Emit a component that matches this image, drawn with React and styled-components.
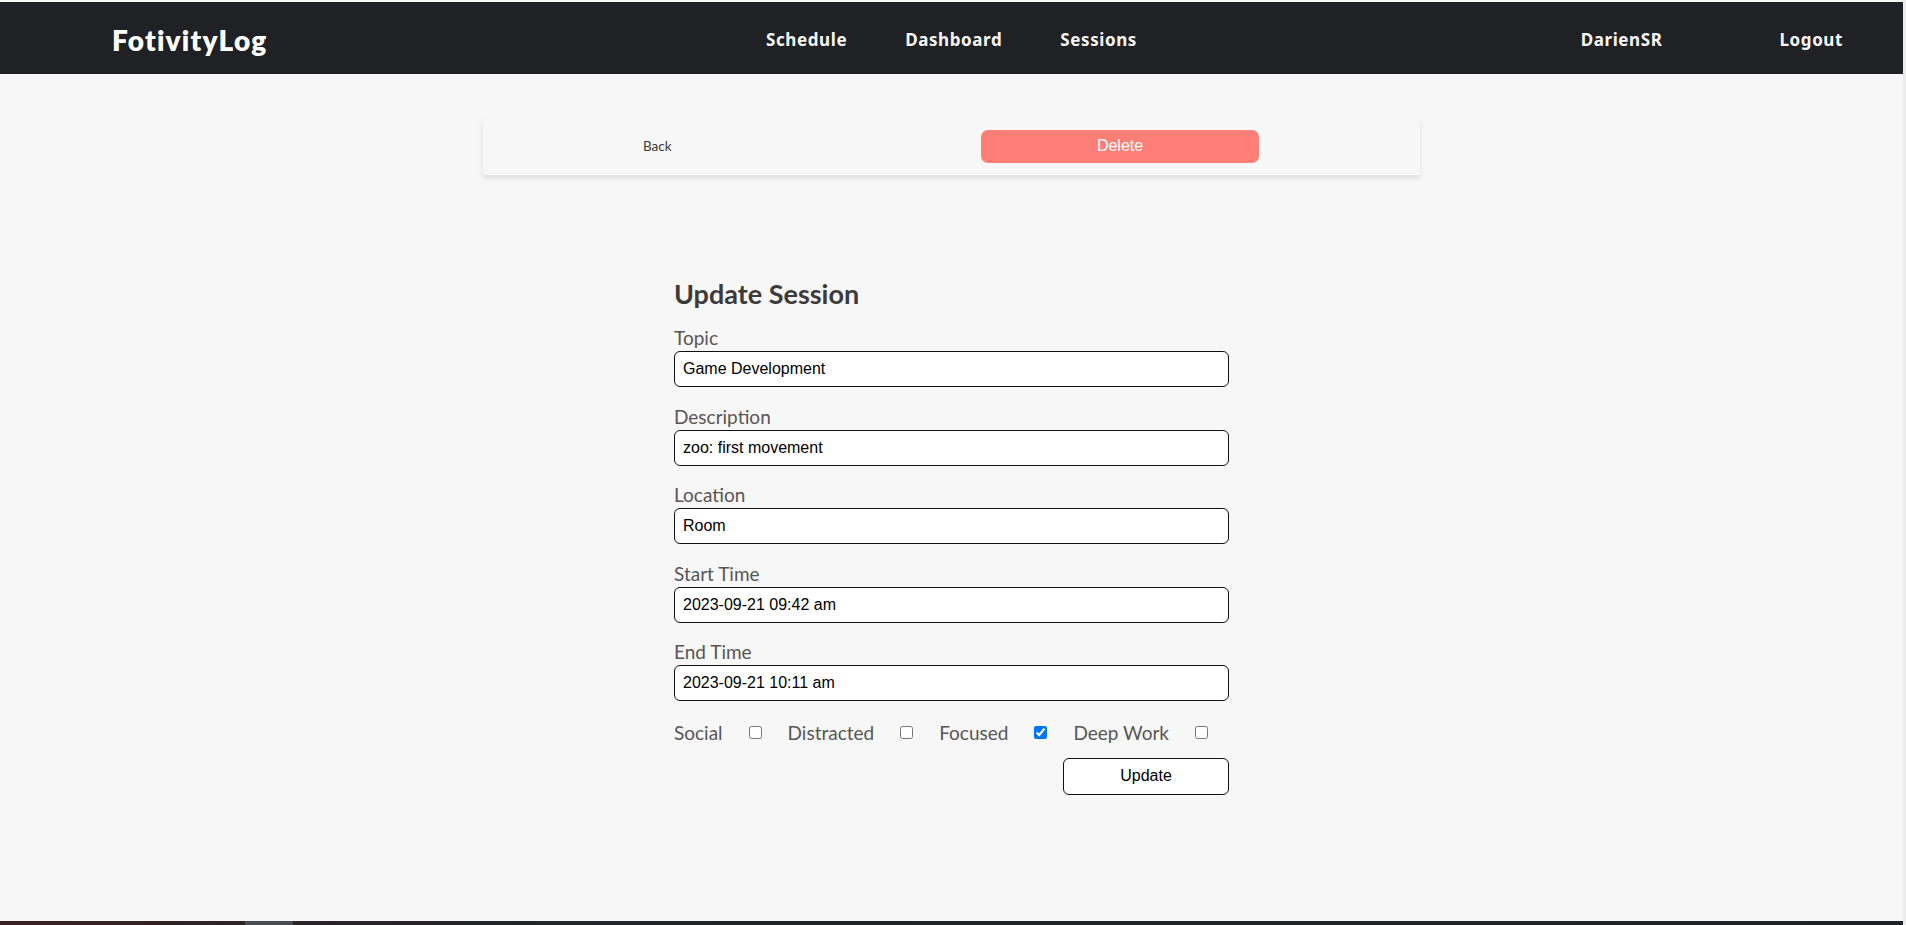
import React from "react";
import styled, { createGlobalStyle } from "styled-components";

const GlobalStyle = createGlobalStyle`
  html, body { margin: 0; padding: 0; background: #f7f7f7; }
  body { font-family: "Lato", "Noto Sans", sans-serif; }
  * { box-sizing: border-box; }
`;

const Page = styled.div`
  min-height: 100vh;
  display: flex;
  flex-direction: column;
  padding-top: 2px;
  background: #f7f7f7;
  border-right: 3px solid #ececec;
`;

const Nav = styled.nav`
  height: 72px;
  padding-top: 3px;
  background: #1f2124;
  display: grid;
  grid-template-columns: 1fr auto 1fr;
  align-items: center;
`;

const Logo = styled.div`
  padding-left: 112px;
  font-family: "Lato", sans-serif;
  font-weight: 800;
  font-size: 28px;
  color: #ffffff;
  letter-spacing: 1.2px;
`;

const NavGroup = styled.div`
  display: flex;
  align-items: center;
  gap: ${(p) => p.$gap}px;
  justify-content: ${(p) => (p.$end ? "flex-end" : "center")};
  padding-right: ${(p) => (p.$end ? 60 : 0)}px;
`;

const NavLink = styled.a`
  font-family: "Noto Sans", sans-serif;
  font-weight: 700;
  font-size: 17px;
  letter-spacing: 0.6px;
  color: #f6f6f6;
  text-decoration: none;
  cursor: pointer;
`;

const Main = styled.main`
  flex: 1;
  display: flex;
  flex-direction: column;
  align-items: center;
`;

const ActionCard = styled.div`
  margin-top: 43px;
  width: 937px;
  height: 58px;
  background: #f7f7f7;
  box-shadow: 0 3px 5px rgba(0, 0, 0, 0.1);
  display: flex;
  align-items: center;
  justify-content: space-between;
  padding: 0 161px 0 160px;
`;

const BackLink = styled.a`
  font-family: "Lato", sans-serif;
  font-size: 13.5px;
  color: #3a3a3a;
  cursor: pointer;
`;

const DeleteButton = styled.button`
  width: 278px;
  height: 33px;
  border: none;
  border-radius: 7px;
  background: #ff7f78;
  color: #ffffff;
  font-family: "Liberation Sans", Arial, sans-serif;
  font-size: 16px;
  cursor: pointer;
`;

const Form = styled.form`
  margin-top: 103px;
  width: 555px;
  display: flex;
  flex-direction: column;
`;

const Title = styled.h2`
  margin: 0 0 17px 0;
  font-family: "Lato", sans-serif;
  font-weight: 700;
  font-size: 27px;
  line-height: 32px;
  color: #3c3a3a;
`;

const Field = styled.div`
  display: flex;
  flex-direction: column;
  gap: 2px;
  margin-bottom: 18.5px;
`;

const Label = styled.label`
  font-family: "Lato", sans-serif;
  font-size: 19px;
  line-height: 22px;
  color: #575555;
`;

const Input = styled.input`
  height: 36px;
  width: 100%;
  border: 1px solid #111;
  border-radius: 6px;
  background: #fff;
  padding: 0 8px;
  font-family: "Liberation Sans", Arial, sans-serif;
  font-size: 16px;
  color: #000;
  outline: none;
`;

const CheckRow = styled.div`
  display: flex;
  align-items: center;
  gap: 26px;
  margin-top: 2px;
  height: 22px;
`;

const CheckLabel = styled.span`
  font-family: "Lato", sans-serif;
  font-size: 19px;
  line-height: 22px;
  color: #575555;
`;

const Check = styled.input`
  margin: 0;
  width: 13px;
  height: 13px;
`;

const ButtonRow = styled.div`
  display: flex;
  justify-content: flex-end;
  margin-top: 14px;
`;

const UpdateButton = styled.button`
  width: 166px;
  height: 37px;
  border: 1px solid #111;
  border-radius: 6px;
  background: #fff;
  font-family: "Liberation Sans", Arial, sans-serif;
  font-size: 16px;
  color: #000;
  cursor: pointer;
`;

const Taskbar = styled.div`
  height: 4px;
  background: linear-gradient(90deg, #3a2225 0%, #24252a 25%, #1f2226 100%);
  display: flex;
`;

const TaskItem = styled.div`
  margin-left: 245px;
  width: 48px;
  background: #4a4d51;
`;

const fields = [
  ["Topic", "Game Development"],
  ["Description", "zoo: first movement"],
  ["Location", "Room"],
  ["Start Time", "2023-09-21 09:42 am"],
  ["End Time", "2023-09-21 10:11 am"],
];

const moods = [
  ["Social", false],
  ["Distracted", false],
  ["Focused", true],
  ["Deep Work", false],
];

export default function App() {
  return (
    <>
      <GlobalStyle />
      <Page>
        <Nav>
          <Logo>FotivityLog</Logo>
          <NavGroup $gap={58}>
            <NavLink>Schedule</NavLink>
            <NavLink>Dashboard</NavLink>
            <NavLink>Sessions</NavLink>
          </NavGroup>
          <NavGroup $gap={117} $end>
            <NavLink>DarienSR</NavLink>
            <NavLink>Logout</NavLink>
          </NavGroup>
        </Nav>
        <Main>
          <ActionCard>
            <BackLink>Back</BackLink>
            <DeleteButton type="button">Delete</DeleteButton>
          </ActionCard>
          <Form onSubmit={(e) => e.preventDefault()}>
            <Title>Update Session</Title>
            {fields.map(([label, value]) => (
              <Field key={label}>
                <Label>{label}</Label>
                <Input defaultValue={value} />
              </Field>
            ))}
            <CheckRow>
              {moods.map(([label, checked]) => (
                <React.Fragment key={label}>
                  <CheckLabel>{label}</CheckLabel>
                  <Check type="checkbox" defaultChecked={checked} />
                </React.Fragment>
              ))}
            </CheckRow>
            <ButtonRow>
              <UpdateButton type="submit">Update</UpdateButton>
            </ButtonRow>
          </Form>
        </Main>
        <Taskbar>
          <TaskItem />
        </Taskbar>
      </Page>
    </>
  );
}
